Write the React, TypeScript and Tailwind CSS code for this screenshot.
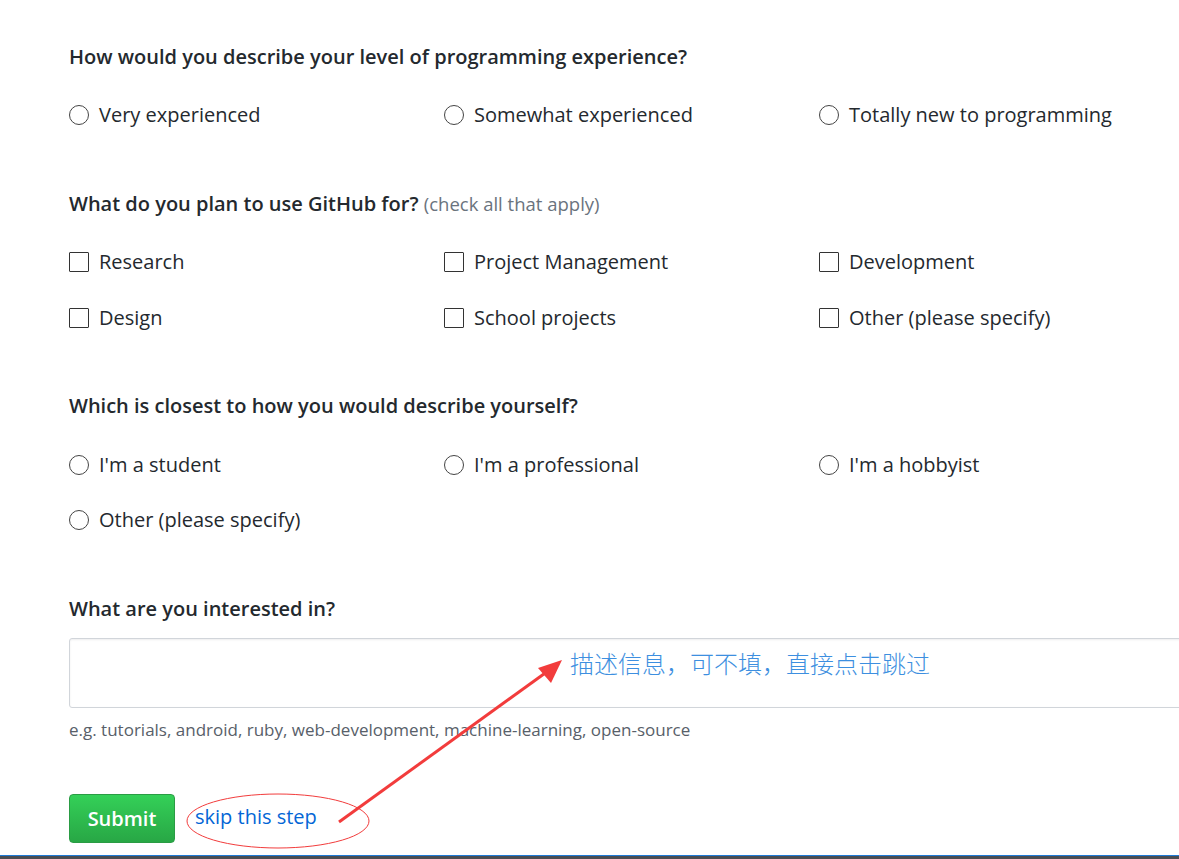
import React from "react";

const font = { fontFamily: '"Open Sans", "Noto Sans", sans-serif' };

function Radio({ label }: { label: string }) {
  return (
    <label className="flex items-center h-[30px] text-[20px] text-[#24292e]">
      <span className="w-[20px] h-[20px] rounded-full border border-[#444] bg-white shrink-0" />
      <span className="ml-[10px]">{label}</span>
    </label>
  );
}

function Check({ label }: { label: string }) {
  return (
    <label className="flex items-center h-[30px] text-[20px] text-[#24292e]">
      <span className="w-[20px] h-[20px] rounded-[1px] border-[1.5px] border-[#333] bg-white shrink-0" />
      <span className="ml-[10px]">{label}</span>
    </label>
  );
}

function Heading({ children }: { children: React.ReactNode }) {
  return <h3 className="h-[30px] leading-[30px] text-[20px] font-semibold text-[#24292e]">{children}</h3>;
}

export default function App() {
  return (
    <div className="relative w-[1179px] h-[859px] overflow-hidden bg-white" style={font}>
      <div className="pl-[69px] pt-[42px] w-[1300px]">
        <Heading>How would you describe your level of programming experience?</Heading>
        <div className="grid grid-cols-[375px_375px_375px] mt-[28px]">
          <Radio label="Very experienced" />
          <Radio label="Somewhat experienced" />
          <Radio label="Totally new to programming" />
        </div>

        <div className="mt-[59px]">
          <Heading>
            What do you plan to use GitHub for?{" "}
            <span className="font-normal text-[18.5px] text-[#6a737d]">(check all that apply)</span>
          </Heading>
        </div>
        <div className="grid grid-cols-[375px_375px_375px] gap-y-[26px] mt-[28px]">
          <Check label="Research" />
          <Check label="Project Management" />
          <Check label="Development" />
          <Check label="Design" />
          <Check label="School projects" />
          <Check label="Other (please specify)" />
        </div>

        <div className="mt-[58px]">
          <Heading>Which is closest to how you would describe yourself?</Heading>
        </div>
        <div className="grid grid-cols-[375px_375px_375px] gap-y-[25px] mt-[29px]">
          <Radio label="I'm a student" />
          <Radio label="I'm a professional" />
          <Radio label="I'm a hobbyist" />
          <Radio label="Other (please specify)" />
        </div>

        <div className="mt-[59px]">
          <Heading>What are you interested in?</Heading>
        </div>
        <div className="mt-[14px] h-[70px] w-[1200px] rounded-[3px] border border-[#d1d5da] bg-white shadow-[inset_0_1px_2px_rgba(27,31,35,0.075)]" />
        <p className="mt-[11px] h-[22px] leading-[22px] text-[17px] text-[#586069]">
          e.g. tutorials, android, ruby, web-development, machine-learning, open-source
        </p>
        <div className="mt-[53px] flex items-center">
          <button className="w-[106px] h-[49px] rounded-[4px] border border-[#2a9c44] bg-gradient-to-b from-[#34d058] to-[#28a745] text-white text-[20px] font-semibold">
            Submit
          </button>
          <a className="ml-[20px] text-[20px] text-[#0366d6] -mt-[4px]">skip this step</a>
        </div>
      </div>

      <div className="absolute left-0 right-0 bottom-0 h-[4px] border-t border-[#1e7ad6] bg-[#4a4d52]" />

      <span
        className="absolute left-[570px] top-[647px] text-[24px] leading-[32px] text-[#3d8fe0]"
        style={{ fontFamily: '"Noto Sans CJK SC", sans-serif', fontWeight: 300 }}
      >
        描述信息，可不填，直接点击跳过
      </span>

      <svg className="absolute inset-0 pointer-events-none" width="1179" height="859">
        <ellipse cx="278" cy="821" rx="91" ry="27" fill="none" stroke="#f23c3c" strokeWidth="1" />
        <line x1="339" y1="822" x2="548" y2="671" stroke="#f23c3c" strokeWidth="3" />
        <polygon points="562,660 538,668 551,683" fill="#f23c3c" />
      </svg>
    </div>
  );
}
